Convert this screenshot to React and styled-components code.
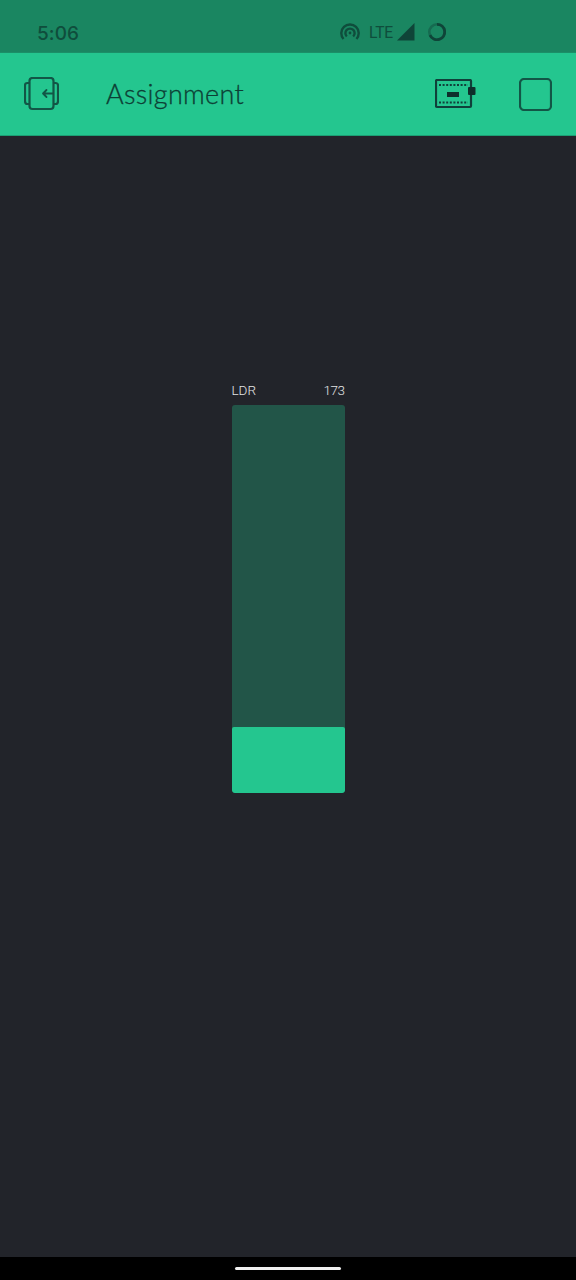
import React from "react";
import styled, { createGlobalStyle } from "styled-components";

const GlobalStyle = createGlobalStyle`
  html, body {
    margin: 0;
    padding: 0;
    background: #22242a;
  }
`;

const Screen = styled.div`
  width: 576px;
  height: 1280px;
  display: flex;
  flex-direction: column;
  background: #22242a;
  font-family: "Roboto", "Liberation Sans", sans-serif;
  overflow: hidden;
`;

const StatusBar = styled.div`
  height: 53px;
  flex: none;
  box-sizing: border-box;
  padding: 11px 129px 0 37px;
  display: flex;
  align-items: center;
  justify-content: space-between;
  background: #1a8661;
  border-bottom: 1px solid #1b8f68;
  color: #0f4d3c;
`;

const Clock = styled.span`
  font-family: "Inter", "Roboto", sans-serif;
  font-size: 19px;
  font-weight: 500;
  letter-spacing: 0.1px;
  padding-top: 3px;
`;

const StatusIcons = styled.div`
  display: flex;
  align-items: center;
`;

const Lte = styled.span`
  font-size: 17px;
  font-weight: 400;
  width: 29px;
  margin: 0 -1px 0 9px;
  letter-spacing: -0.2px;
  transform: scaleX(0.92);
  transform-origin: left center;
`;

const Toolbar = styled.header`
  height: 83px;
  flex: none;
  box-sizing: border-box;
  padding: 0 24px;
  display: flex;
  align-items: center;
  background: #24c68f;
  border-bottom: 1px solid #1c9f74;
  color: #10463a;
`;

const Title = styled.h1`
  flex: 1;
  margin: 0 0 2px 47px;
  font-family: "Lato", "Roboto", sans-serif;
  font-size: 27px;
  font-weight: 300;
  letter-spacing: 0.3px;
  -webkit-text-stroke: 0.3px #0d3f35;
  color: #0d3f35;
`;

const ToolIcon = styled.svg`
  display: block;
  flex: none;
  margin-left: ${(p) => p.$gap || 0}px;
`;

const Canvas = styled.main`
  flex: 1;
  padding-top: 246px;
  display: flex;
  justify-content: center;
`;

const Widget = styled.section`
  width: 113px;
`;

const LabelRow = styled.div`
  height: 23px;
  display: flex;
  justify-content: space-between;
  align-items: center;
  padding-bottom: 7px;
  box-sizing: border-box;
  font-size: 13.5px;
  font-weight: 300;
  color: #e2e4e4;
`;

const Value = styled.span`
  letter-spacing: -0.5px;
`;

const Track = styled.div`
  height: 388px;
  display: flex;
  align-items: flex-end;
  border-radius: 3px;
  overflow: hidden;
  background: #225548;
`;

const Fill = styled.div`
  width: 100%;
  background: #24c68f;
  border-radius: 2px;
`;

const NavBar = styled.footer`
  height: 23px;
  flex: none;
  display: flex;
  justify-content: center;
  padding-top: 10px;
  box-sizing: border-box;
  background: #000;
`;

const HomePill = styled.div`
  width: 106px;
  height: 3px;
  border-radius: 2px;
  background: #f0f0f0;
`;

const PARTS = 173 / 1023;

const App = () => (
  <Screen>
    <GlobalStyle />
    <StatusBar>
      <Clock>5:06</Clock>
      <StatusIcons>
        <svg width="20" height="17" viewBox="0 0 20 17" fill="none" stroke="#0f4d3c" strokeWidth="2.4">
          <path d="M3.5 16 A8.7 8.7 0 1 1 16.5 16" />
          <path d="M6.8 13.5 A4.6 4.6 0 1 1 13.2 13.5" />
          <circle cx="10" cy="10" r="1.4" fill="#0f4d3c" stroke="none" />
        </svg>
        <Lte>LTE</Lte>
        <svg width="18" height="18" viewBox="0 0 18 18">
          <path d="M0 17.5 L17.5 0 V17.5 Z" fill="#0f4438" />
        </svg>
        {/* battery ring, charged part darker */}
        <svg width="20" height="20" viewBox="0 0 20 20" fill="none" style={{ marginLeft: 12 }}>
          <circle cx="10" cy="10" r="7.7" stroke="#166a50" strokeWidth="2.6" />
          <path d="M10 2.3 A7.7 7.7 0 1 1 3 13.2" stroke="#0f4438" strokeWidth="2.8" />
        </svg>
      </StatusIcons>
    </StatusBar>
    <Toolbar>
      <ToolIcon width="35" height="34" viewBox="0 0 35 34" fill="none" stroke="#125646" strokeWidth="2.2" strokeLinecap="round" strokeLinejoin="round">
        <rect x="5.5" y="1" width="24" height="31" rx="3" />
        <path d="M5 6 H3.5 Q1 6 1 8.5 V24 Q1 27 3.5 27 H5" />
        <path d="M30 6 H31.5 Q34 6 34 8.5 V24 Q34 27 31.5 27 H30" />
        <path d="M29 16.5 H19 M22.5 13 L19 16.5 L22.5 20" strokeWidth="1.8" />
      </ToolIcon>
      <Title>Assignment</Title>
      <ToolIcon width="41" height="30" viewBox="0 0 41 30" fill="none">
        <rect x="1" y="1" width="35" height="27" stroke="#10403a" strokeWidth="2.2" rx="1" />
        <path d="M4 6 H33 M4 23.5 H33" stroke="#10403a" strokeWidth="2.2" strokeDasharray="2 1.6" />
        <rect x="12" y="13" width="12" height="5" fill="#0e2f2c" />
        <rect x="33" y="8" width="7.5" height="8" rx="1" fill="#0e2f2c" />
      </ToolIcon>
      <ToolIcon $gap={43} width="33" height="33" viewBox="0 0 33 33" fill="none">
        <rect x="1" y="1" width="31" height="31" rx="4" stroke="#125646" strokeWidth="2.2" />
      </ToolIcon>
    </Toolbar>
    <Canvas>
      <Widget>
        <LabelRow>
          <span>LDR</span>
          <Value>173</Value>
        </LabelRow>
        <Track>
          <Fill style={{ height: `${PARTS * 388}px` }} />
        </Track>
      </Widget>
    </Canvas>
    <NavBar>
      <HomePill />
    </NavBar>
  </Screen>
);

export default App;
